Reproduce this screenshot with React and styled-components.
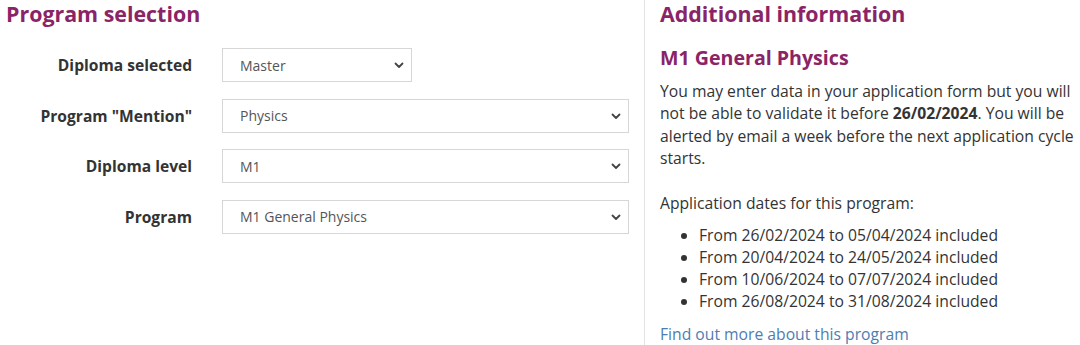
import React from "react";
import styled, { createGlobalStyle } from "styled-components";

const Global = createGlobalStyle`
  html, body { margin: 0; padding: 0; background: #fff; }
  body { font-family: "Open Sans", "Noto Sans", Arial, sans-serif; color: #333; }
  * { box-sizing: border-box; }
`;

const Page = styled.div`
  display: grid;
  grid-template-columns: 645px 1fr;
  width: 1080px;
  height: 345px;
  overflow: hidden;
`;

const LeftCol = styled.section`
  border-right: 1px solid #e3e3e3;
  padding: 0 0 0 6px;
`;

const RightCol = styled.section`
  padding: 0 0 0 15px;
`;

const Heading = styled.h2`
  margin: 1px 0 0;
  font-size: 21.4px;
  line-height: 26px;
  font-weight: 700;
  color: #8a2466;
`;

const SubHeading = styled.h3`
  margin: 19px 0 0;
  font-size: 19.6px;
  line-height: 24px;
  font-weight: 700;
  color: #8a2466;
`;

const Form = styled.div`
  display: flex;
  flex-direction: column;
  gap: 16.5px;
  margin-top: 21px;
`;

const Row = styled.div`
  display: grid;
  grid-template-columns: 186px auto;
  column-gap: 30px;
  align-items: center;
`;

const Label = styled.label`
  text-align: right;
  font-size: 15.6px;
  font-weight: 700;
  color: #333;
`;

const SelectWrap = styled.div`
  position: relative;
  width: ${(p) => p.$width}px;
`;

const Select = styled.select`
  appearance: none;
  -webkit-appearance: none;
  width: 100%;
  height: 34px;
  border: 1px solid #d6d6d6;
  border-radius: 0;
  background: #fff;
  padding: 0 30px 0 17px;
  font-family: "Open Sans", Arial, sans-serif;
  font-size: 14px;
  color: #555;
  outline: none;
`;

const Chevron = styled.svg`
  position: absolute;
  right: 6px;
  top: 50%;
  transform: translateY(-50%);
  pointer-events: none;
`;

const Para = styled.p`
  margin: 10px 0 0;
  font-size: 15.7px;
  line-height: 22.3px;
  color: #333;
`;

const Intro = styled.p`
  margin: 23px 0 0;
  font-size: 15.7px;
  line-height: 22px;
`;

const List = styled.ul`
  margin: 10px 0 0;
  padding-left: 39px;
  font-size: 15.7px;
  line-height: 22px;
`;

const Link = styled.a`
  display: block;
  margin-top: 11px;
  font-size: 15.7px;
  line-height: 22px;
  color: #4d7db2;
  text-decoration: none;
`;

const fields = [
  { label: "Diploma selected", value: "Master", width: 190 },
  { label: 'Program "Mention"', value: "Physics", width: 407 },
  { label: "Diploma level", value: "M1", width: 407 },
  { label: "Program", value: "M1 General Physics", width: 407 },
];

const dates = [
  ["26/02/2024", "05/04/2024"],
  ["20/04/2024", "24/05/2024"],
  ["10/06/2024", "07/07/2024"],
  ["26/08/2024", "31/08/2024"],
];

export default function App() {
  return (
    <>
      <Global />
      <Page>
        <LeftCol>
          <Heading>Program selection</Heading>
          <Form>
            {fields.map((f) => (
              <Row key={f.label}>
                <Label>{f.label}</Label>
                <SelectWrap $width={f.width}>
                  <Select defaultValue={f.value}>
                    <option value={f.value}>{f.value}</option>
                  </Select>
                  <Chevron width="14" height="14" viewBox="0 0 14 14">
                    <path d="M3.5 5.5 L7 9 L10.5 5.5" fill="none" stroke="#444" strokeWidth="1.8" strokeLinecap="round" strokeLinejoin="round" />
                  </Chevron>
                </SelectWrap>
              </Row>
            ))}
          </Form>
        </LeftCol>
        <RightCol>
          <Heading>Additional information</Heading>
          <SubHeading>M1 General Physics</SubHeading>
          <Para>
            You may enter data in your application form but you will not be able to validate it before <b>26/02/2024</b>. You will be alerted by email a week before the next application cycle starts.
          </Para>
          <Intro>Application dates for this program:</Intro>
          <List>
            {dates.map(([a, b]) => (
              <li key={a}>From {a} to {b} included</li>
            ))}
          </List>
          <Link href="#">Find out more about this program</Link>
        </RightCol>
      </Page>
    </>
  );
}
